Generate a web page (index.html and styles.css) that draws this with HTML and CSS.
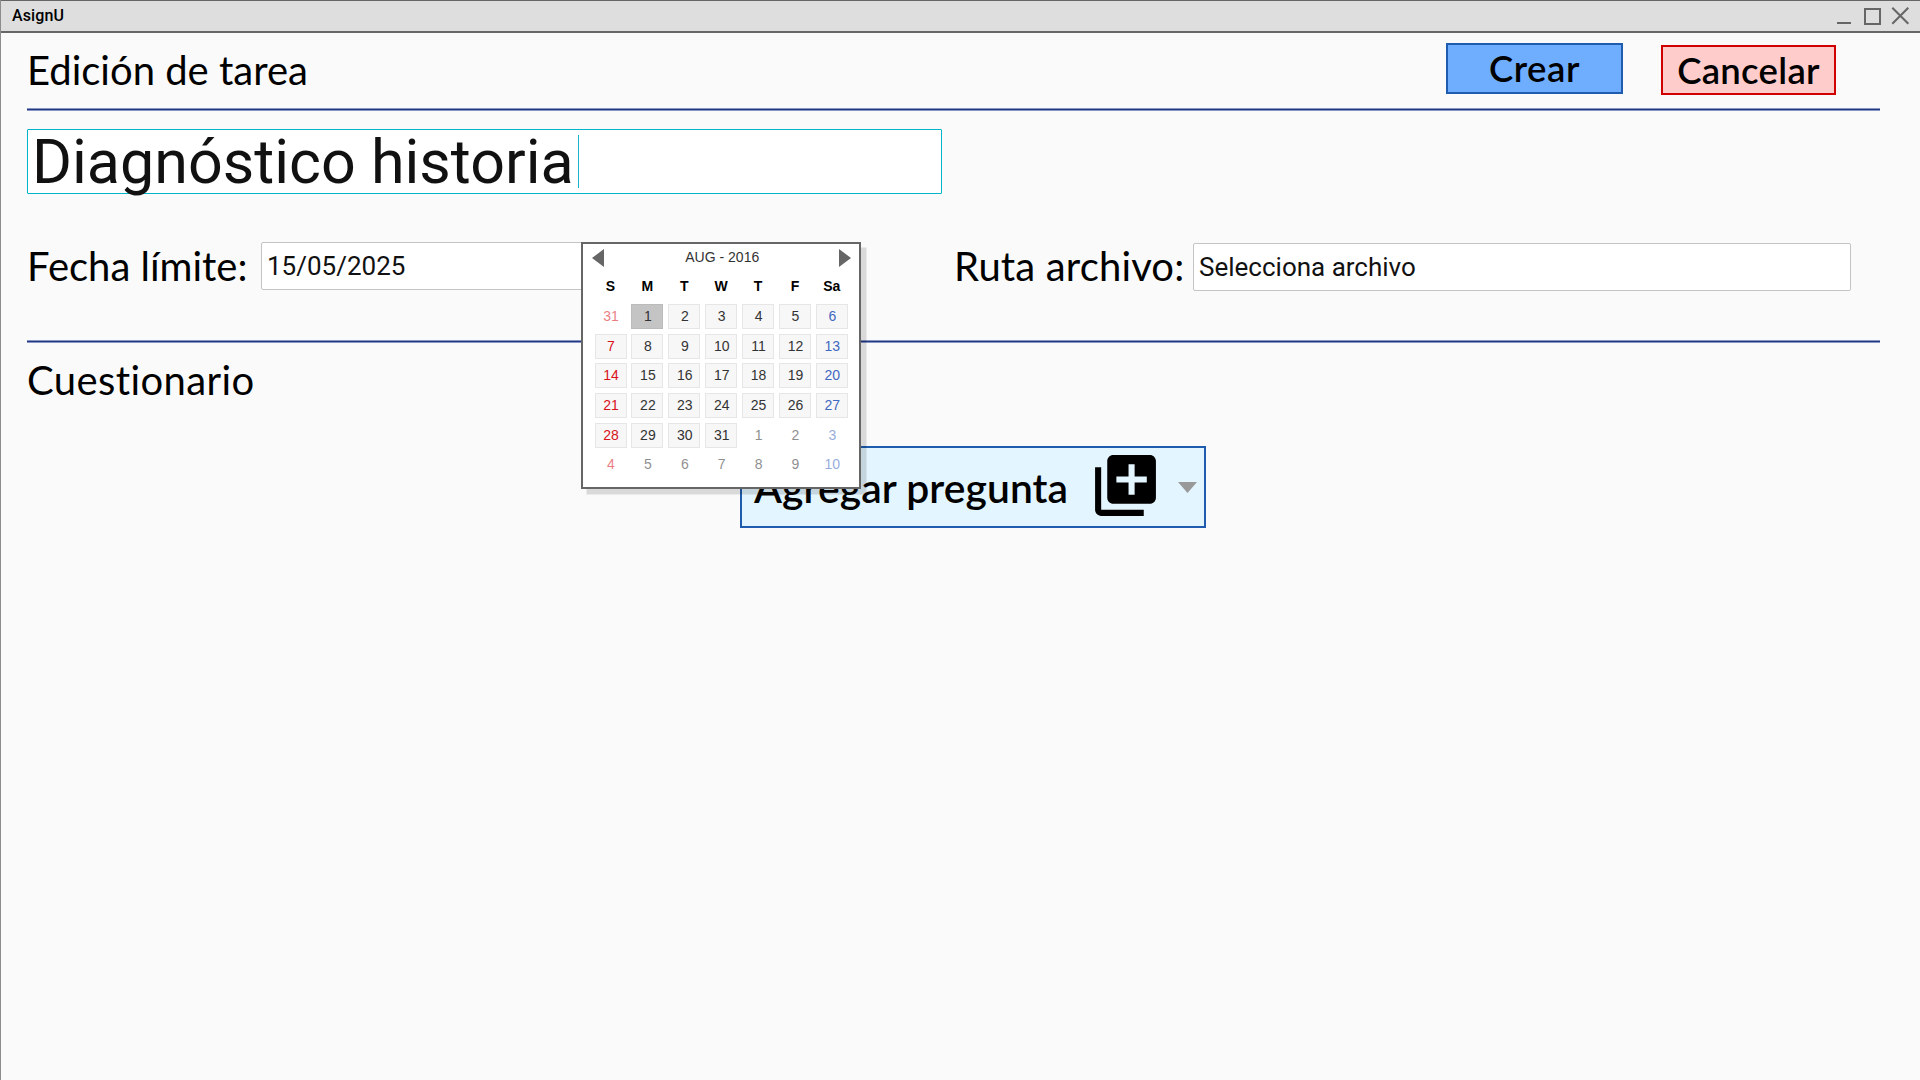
FILE: index.html
```html
<!DOCTYPE html>
<html lang="es">
<head>
<meta charset="utf-8">
<title>AsignU</title>
<link rel="stylesheet" href="styles.css">
</head>
<body>
<div class="window">
  <div class="titlebar">
    <span class="app-name">AsignU</span>
    <svg class="controls" width="74" height="20" viewBox="0 0 74 20" fill="none" stroke="#666" stroke-width="2">
      <path d="M1 17H15M29 3H44V18H29ZM56.300 1.800L72.300 17.800M72.300 1.800L56.300 17.800"/>
    </svg>
  </div>
  <main class="content">
    <header class="header">
      <h1 class="heading">Edición de tarea</h1>
      <button class="btn btn-create">Crear</button>
      <button class="btn btn-cancel">Cancelar</button>
    </header>
    <div class="rule"></div>
    <div class="name-input"><span class="name-text">Diagnóstico historia</span><span class="cursor"></span></div>
    <div class="fields">
      <label class="heading label-date">Fecha límite:</label>
      <div class="date-field">
        <div class="input date-input">15/05/2025</div>
        <div class="calendar">
          <div class="cal-head">
            <svg width="12" height="18" viewBox="0 0 12 18"><path d="M12 0V18L0 9Z" fill="#666"/></svg>
            <span>AUG - 2016</span>
            <svg width="12" height="18" viewBox="0 0 12 18"><path d="M0 0V18L12 9Z" fill="#666"/></svg>
          </div>
          <div class="week names"><b>S</b><b>M</b><b>T</b><b>W</b><b>T</b><b>F</b><b>Sa</b></div>
          <div class="week"><i class="out">31</i><i class="sel">1</i><i>2</i><i>3</i><i>4</i><i>5</i><i>6</i></div>
          <div class="week"><i>7</i><i>8</i><i>9</i><i>10</i><i>11</i><i>12</i><i>13</i></div>
          <div class="week"><i>14</i><i>15</i><i>16</i><i>17</i><i>18</i><i>19</i><i>20</i></div>
          <div class="week"><i>21</i><i>22</i><i>23</i><i>24</i><i>25</i><i>26</i><i>27</i></div>
          <div class="week"><i>28</i><i>29</i><i>30</i><i>31</i><i class="out">1</i><i class="out">2</i><i class="out">3</i></div>
          <div class="week"><i class="out">4</i><i class="out">5</i><i class="out">6</i><i class="out">7</i><i class="out">8</i><i class="out">9</i><i class="out">10</i></div>
        </div>
      </div>
      <label class="heading label-path">Ruta archivo:</label>
      <div class="input path-input">Selecciona archivo</div>
    </div>
    <div class="rule"></div>
    <h2 class="heading section">Cuestionario</h2>
    <button class="btn btn-add">
      <span class="add-text">Agregar pregunta</span>
      <svg class="add-icon" width="73" height="73" viewBox="0 0 24 24"><path d="M4 6H2v14c0 1.1.9 2 2 2h14v-2H4V6zm16-4H8c-1.100 0-2 .9-2 2v12c0 1.100.9 2 2 2h12c1.100 0 2-.9 2-2V4c0-1.100-.9-2-2-2zm-1 9h-4v4h-2v-4H9V9h4V5h2v4h4v2z"/></svg>
      <svg class="caret" width="19" height="11" viewBox="0 0 19 11"><path d="M0 0H19L9.500 11Z" fill="#999"/></svg>
    </button>
  </main>
</div>
</body>
</html>
```
FILE: styles.css
```css
* { box-sizing: border-box; }
body { margin: 0; background: #fafafa; color: #000; }
.window { width: 1920px; height: 1080px; overflow: hidden; border-left: 1px solid #8c8c8c; }
.titlebar {
  display: flex; justify-content: space-between; align-items: center;
  height: 33px; padding: 0 10px 0 11px;
  background: #dedede; border-top: 1px solid #666; border-bottom: 2px solid #666;
}
.app-name { font: 500 16px/20px Roboto, sans-serif; letter-spacing: .1px; }
.content { padding: 0 40px 0 26px; }
.header { display: flex; align-items: flex-start; height: 75px; padding-right: 44px; }
.heading {
  margin: 0; font: 400 40px/48px Lato, sans-serif; font-variant-ligatures: none; white-space: nowrap;
}
.header .heading { margin-top: 13px; margin-right: auto; }
.btn {
  margin: 0; padding: 0; border: 2px solid #1f5cad; color: #000;
  font: 600 36.500px/42px Lato, sans-serif; white-space: nowrap;
}
.btn-create { width: 177px; height: 51px; margin-top: 10px; margin-right: 38px; padding-bottom: 2px; background: #6faeff; letter-spacing: .6px; }
.btn-cancel { width: 175px; height: 50px; margin-top: 12px; padding-bottom: 1px; background: #fcc; border-color: #d00000; letter-spacing: .3px; }
.rule { height: 3px; background: #24387f; border-top: 1px solid #8795c4; border-bottom: 1px solid #8795c4; }
.name-input {
  display: flex; align-items: center; width: 915px; height: 65px; margin-top: 18px; padding-left: 4px;
  background: #fff; border: 1px solid #00b4cc; border-radius: 1px;
  font: 400 61px/63px Roboto, sans-serif; color: #111; white-space: nowrap;
}
.name-text { padding-top: 1px; }
.cursor { width: 1px; height: 53px; margin-left: 4px; background: #14b4cc; }
.fields { display: flex; align-items: flex-start; height: 146px; padding-top: 48px; }
.input {
  height: 48px; padding-left: 5px; background: #fff; border: 1px solid #c4c4c4; border-radius: 2px;
  font: 400 26px/46px Roboto, sans-serif; color: #111; white-space: nowrap;
}
.label-date { width: 234px; }
.date-field { position: relative; width: 693px; }
.date-input { width: 322px; }
.label-path { width: 239px; letter-spacing: .15px; }
.path-input { width: 658px; margin-top: 1px; }
.calendar {
  position: absolute; left: 320px; top: 0; z-index: 2; width: 280px; height: 247px; padding: 5px 8px 0 11.500px;
  background: #fff; border: 2px solid #666; box-shadow: 5.500px 5.500px 0 rgba(0, 0, 0, .13);
  font: 400 14px/25px "Liberation Sans", Arial, sans-serif; color: #333;
}
.cal-head { display: flex; justify-content: space-between; align-items: center; height: 18px; margin: 0 0 0 -3px; }
.cal-head span { padding: 0 0 1px 2px; }
.week { display: grid; grid-template-columns: repeat(7, 32px); column-gap: 4.900px; height: 29.700px; text-align: center; }
.names { margin-top: 7px; height: 30px; color: #000; }
.week i { height: 25px; padding-left: 1px; border: 1px solid #e6e6e6; background: #f7f7f7; font-style: normal; line-height: 22px; }
.week i:first-child { color: #d8121a; }
.week i:last-child { color: #4169c1; }
.week i.out { border-color: transparent; background: none; opacity: .55; }
.week i.sel { background: #c4c4c4; border-color: #bbb; }
.section { margin-top: 13px; letter-spacing: .4px; }
.btn-add {
  display: flex; align-items: center; width: 466px; height: 82px; margin: 42px 0 0 713px; padding-left: 12px;
  background: #e3f5ff; font-size: 40.800px; line-height: 48px; letter-spacing: .07px;
}
.add-text { padding-top: 1px; }
.add-icon { margin: -3px 0 0 21px; }
.caret { margin-left: 16px; }
```
